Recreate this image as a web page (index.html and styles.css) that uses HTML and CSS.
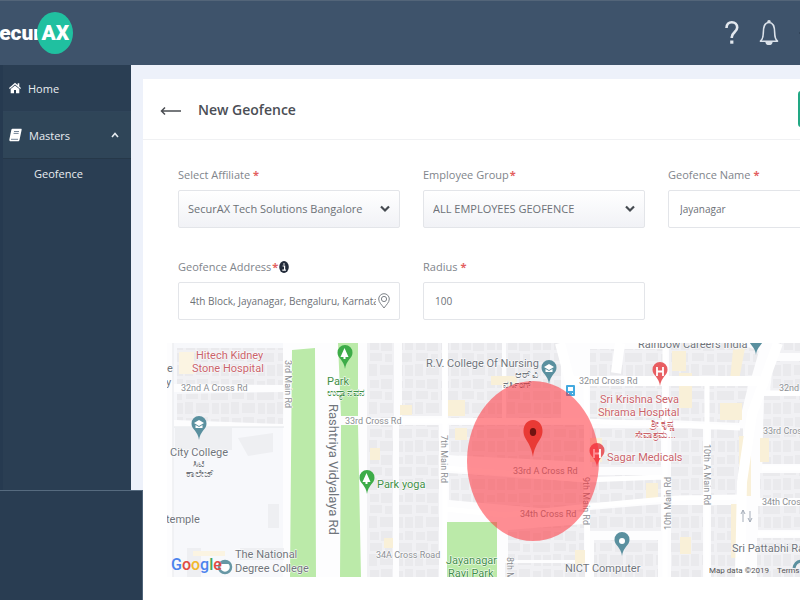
FILE: index.html
```html
<!DOCTYPE html>
<html lang="en">
<head>
<meta charset="utf-8">
<title>New Geofence</title>
<link rel="stylesheet" href="styles.css">
</head>
<body>
<div class="app">
  <header class="topbar">
    <a class="logo" href="#"><span class="logo-lead">Secur</span><span class="logo-mark">AX</span></a>
    <div class="tools">
      <button class="tool" aria-label="Help"><svg width="16" height="28" viewBox="0 0 16 28" fill="none" stroke="#e3e8ee" stroke-width="2.6"><path d="M2.5 9C2.5 5 4.700 3.300 7.800 3.300s5.400 2 5.400 5.200c0 4.500-5.400 5-5.400 9.500v1"/><path d="M7.800 21.500v3.200" stroke-width="3.2"/></svg></button>
      <button class="tool" aria-label="Notifications"><svg width="20" height="28" viewBox="0 0 20 28" fill="none" stroke="#dbe2ea" stroke-width="1.6"><path d="M1.500 22.200h17c-2.500-2.200-2.800-4.200-2.800-8.200 0-5.500-1-10.500-5.700-10.500S4.300 8.500 4.300 14c0 4-.3 6-2.800 8.200z" stroke-linejoin="round"/><path d="M9 3c0-1.500 2-1.500 2 0"/><path d="M7.200 23c.5 3 5.100 3 5.600 0z" fill="#dbe2ea"/></svg></button>
      <button class="tool" aria-label="Account"><svg width="20" height="28" viewBox="0 0 20 28" fill="#26384b"><path d="M1 14l2-2v4z"/></svg></button>
    </div>
  </header>
  <div class="body">
    <nav class="sidebar">
      <a class="item" href="#"><svg width="12" height="12" viewBox="0 0 12 12" fill="#fff"><path d="M6 .7L0 6l.8.900L6 2.500l5.200 4.400.8-.9-1.700-1.500V1.200H8.700v1.900z"/><path d="M6 3.400L1.700 7v4.300H5V8h2v3.300h3.300V7z"/></svg><span>Home</span></a>
      <a class="item item-open" href="#"><svg width="13" height="14" viewBox="0 0 13 14"><path d="M3.500.8h8.300c.8 0 1 .5.800 1.200L10.500 12c-.2.900-.7 1.300-1.500 1.300H1.800c-1.200 0-1.700-.9-1.400-2.100L2.300 2C2.500 1.200 2.900.8 3.500.8z" fill="#fff"/><path d="M5 3.500h5M4.600 5.400h5M2 11.300h7" stroke="#62758a" stroke-width=".9"/></svg><span>Masters</span><svg class="caret" width="8" height="6" viewBox="0 0 8 6" fill="none" stroke="#e6ebf0" stroke-width="1.600"><path d="M1 5l3-3.500L7 5"/></svg></a>
      <a class="subitem" href="#">Geofence</a>
    </nav>
    <main class="main">
      <section class="card">
        <div class="card-head">
          <button class="back" aria-label="Back"><svg width="21" height="10" viewBox="0 0 21 10" fill="none" stroke="#4a4d52" stroke-width="1.500"><path d="M1.500 5H21M5 1.500L1.500 5 5 8.500"/></svg></button>
          <h1>New Geofence</h1>
          <button class="save">Save</button>
        </div>
        <form class="form">
          <div class="field">
            <label for="affiliate">Select Affiliate <b>*</b></label>
            <div class="control"><select id="affiliate"><option>SecurAX Tech Solutions Bangalore</option></select><svg class="chev" width="10" height="8" viewBox="0 0 10 8" fill="none" stroke="#454a50" stroke-width="2.200"><path d="M1 1.500l4 4 4-4"/></svg></div>
          </div>
          <div class="field">
            <label for="group">Employee Group<b>*</b></label>
            <div class="control"><select id="group"><option>ALL EMPLOYEES GEOFENCE</option></select><svg class="chev" width="10" height="8" viewBox="0 0 10 8" fill="none" stroke="#454a50" stroke-width="2.200"><path d="M1 1.500l4 4 4-4"/></svg></div>
          </div>
          <div class="field">
            <label for="name">Geofence Name <b>*</b></label>
            <div class="control"><input id="name" value="Jayanagar"></div>
          </div>
          <div class="field">
            <label for="address">Geofence Address <b>*</b><svg class="info" width="10" height="12" viewBox="0 0 10 12"><ellipse cx="5" cy="6" rx="4.800" ry="6" fill="#222b3a"/><path d="M3.600 5h2v4M3.300 9.200h3.600M5 2.200v1.500" fill="none" stroke="#fff" stroke-width="1.200"/></svg></label>
            <div class="control"><input id="address" class="with-pin" value="4th Block, Jayanagar, Bengaluru, Karnataka"><svg class="locate" width="12" height="16" viewBox="0 0 12 16" fill="none" stroke="#7d8288" stroke-width="1"><path d="M6 15C4 12 .7 9.500.7 6a5.300 5.300 0 0110.600 0C11.300 9.500 8 12 6 15z"/><circle cx="6" cy="6" r="2.600"/></svg></div>
          </div>
          <div class="field">
            <label for="radius">Radius <b>*</b></label>
            <div class="control"><input id="radius" value="100"></div>
          </div>
        </form>
        <svg class="map" viewBox="167 345 734 234" preserveAspectRatio="xMinYMin slice" role="img" aria-label="Map">
          <defs>
            <pattern id="lots" width="46" height="38" patternUnits="userSpaceOnUse">
              <rect width="46" height="38" fill="#f1f1f4"/>
              <path d="M2 2h9v8H2zM13 1h11v10H13zM27 3h8v7h-8zM37 1h8v9h-8zM2 13h12v8H2zM17 14h7v8h-7zM27 13h17v9H27zM1 24h8v12H1zM12 25h13v10H12zM28 25h7v11h-7zM37 25h8v11h-8z" fill="#eaeaed"/>
            </pattern>
            <symbol id="pin" viewBox="0 0 16 24" overflow="visible"><path d="M8 0a7.500 7.500 0 00-7.500 7.800C.5 13.500 7 15 8 24c1-9 7.500-10.500 7.500-16.200A7.500 7.500 0 008 0z"/></symbol>
          </defs>
          <rect x="167" y="345" width="734" height="234" fill="#fdfdfe"/>
          <path d="M174 345h109v42l-109-1zM174 394h110l-1 32-109-4zM174 429h109v150H174z" fill="#f7f8fb"/>
          <path d="M177 350h106v37l-106-1zM177 396l106-2v32l-106-4z" fill="url(#lots)"/>
          <path d="M173 345v234M174 429h110" stroke="#e4e6ea" fill="none"/>
          <path d="M175 430h57v22h-57zM238 440l35-5v19l-25 4zM268 506h11v24h-11zM187 550h14v29h-14zM240 550h44v12h-44z" fill="#eeeff2"/>
          <path d="M179 354h15v22h-15zM193 553h32v5h-32z" fill="#fbf4e2"/>
          <path d="M292 352l23-2 1 229h-26zM338 345h20v73h-17zM341 427h17l3 152h-21z" fill="#bbeaa9"/>
          <path d="M367 345h27v75h-27zM402 345h40v73h-40zM448 345h54v75h-54zM506 345h55v75h-55zM367 427h26v152h-26zM399 427h40v152h-40zM449 427h135v37l-135-7zM449 475l135 9v30l-135-12zM508 532l76-6v36h-76zM505 565h80v14h-80zM590 351h74v28h-74zM669 345h68l22 8-8 28-82-3zM590 388h72v34h-72zM669 388h79l-9 37-70-3zM775 345h126v10H775zM773 363h128v27h-24l-107 5zM764 398h137v68H762zM760 475h141v25H760zM758 508h143v24H758zM757 540h144v39H757zM592 430h69v39h-69zM671 430h32v70h-32zM711 430h32v69h-32zM590 477h71v23l-71 6zM590 512l71-6v27h-71zM671 507h32v72h-32zM711 507h34v72h-34zM594 542h64v37h-64z" fill="url(#lots)"/>
          <g fill="#f9f0d8">
            <path d="M400 407h12v10h-12zM448 402h17v16h-17zM455 430h12v12h-12zM370 450h10v12h-10zM384 540h9v10h-9zM491 378h26v9h-26zM733 352l12-2-6 32h-9zM739 438h12v60h-12zM731 506h14v54h-14zM760 440h9v24h-9zM720 405h22v17h-22zM679 375h13v35h-13zM672 353h14v20h-14zM590 440h12v24h-12zM646 485h12v18h-12zM680 539h11v17h-11zM575 552h10v16h-10zM600 410h10v9h-10z"/>
          </g>
          <path d="M560 345l10 38h190M740 579l2-95 10-68 26-71M620 345l-4 30" fill="none" stroke="#fff" stroke-width="10"/>
          <path d="M345 423h240l155 7M445 345v234M586 385l2 194M665 345v234M707 385v194M445 470l140 12 78-3M445 511l60 6 85-9 85-8 67-1M762 395h139M762 470h139M758 536h143" fill="none" stroke="#fff" stroke-width="5"/>
          <path d="M447 524h50v55h-50z" fill="#bbeaa9"/>
          <g class="lbl">
            <text x="167" y="374">e</text><text x="166" y="388">y</text>
            <g class="road">
              <text x="181" y="393">32nd A Cross Rd</text><text x="345" y="426">33rd Cross Rd</text><text x="376" y="560">34A Cross Road</text>
              <text x="579" y="386">32nd Cross Rd</text><text x="779" y="393">32nd Cross Rd</text><text x="763" y="436">33rd Cross Rd</text><text x="762" y="507">34th Cross Rd</text>
              <text x="513" y="476">33rd A Cross Rd</text><text x="520" y="519">34th Cross Rd</text>
              <text transform="translate(285 362) rotate(90)">3rd Main Rd</text>
              <text transform="translate(441 437) rotate(90)">7th Main Rd</text>
              <text transform="translate(583 479) rotate(90)">9th Main Rd</text>
              <text transform="translate(507 559) rotate(90)">8th Main</text>
              <text transform="translate(671 532) rotate(-90)">10th Main Rd</text>
              <text transform="translate(704 446) rotate(90)">10th A Main Rd</text>
            </g>
            <text class="wide-road" transform="translate(329 406) rotate(90)">Rashtriya Vidyalaya Rd</text>
            <text x="170" y="458">City College</text><text x="193" y="469" class="kn">ಸಿಟಿ</text><text x="186" y="479" class="kn">ಕಾಲೇಜ್</text>
            <text x="166" y="525">temple</text>
            <text x="235" y="560">The National</text><text x="235" y="574">Degree College</text>
            <text x="426" y="369">R.V. College Of Nursing</text><text x="515" y="380" class="kn">ಆರ್ ವಿ</text><text x="503" y="390" class="kn">ನರ್ಸಿಂಗ್</text>
            <text x="638" y="350">Rainbow Careers India</text>
            <text x="565" y="574">NICT Computer</text>
            <text x="732" y="554">Sri Pattabhi Rama</text>
            <g fill="#3f8f47"><text x="327" y="387">Park</text><text x="327" y="398" class="kn">ಉದ್ಯಾನವನ</text><text x="377" y="490">Park yoga</text><text x="446" y="566">Jayanagar</text><text x="448" y="579">Ravi Park</text></g>
            <g fill="#c9626a"><text x="196" y="361">Hitech Kidney</text><text x="192" y="374">Stone Hospital</text><text x="600" y="405">Sri Krishna Seva</text><text x="598" y="418">Shrama Hospital</text><text x="651" y="429" class="kn">ಶ್ರೀ ಕೃಷ್ಣ</text><text x="635" y="440" class="kn">ಸೇವಾಶ್ರಮ...</text><text x="607" y="463">Sagar Medicals</text></g>
          </g>
          <g fill="#fff">
            <use href="#pin" x="191" y="418" width="16" height="24" fill="#5a909f"/><path d="M194 425l5-3 5 3-5 3zM195.500 427v3h7v-3l-3.500 2z"/>
            <use href="#pin" x="541" y="362" width="16" height="24" fill="#5a909f"/><path d="M544 369l5-3 5 3-5 3zM545.500 371v3h7v-3l-3.500 2z"/>
            <use href="#pin" x="748" y="333" width="16" height="24" fill="#5a909f"/>
            <use href="#pin" x="614" y="534" width="16" height="24" fill="#5a909f"/><circle cx="622" cy="543" r="3"/>
            <use href="#pin" x="337" y="347" width="16" height="24" fill="#3dac48"/><path d="M344.500 350l4 9h-3v2h-2v-2h-3z"/>
            <use href="#pin" x="359" y="472" width="16" height="24" fill="#3dac48"/><path d="M366.500 475l4 9h-3v2h-2v-2h-3z"/>
            <use href="#pin" x="652" y="364" width="16" height="24" fill="#e85e62"/><path d="M657 369v9M663 369v9M657 373.500h6" stroke="#fff" stroke-width="1.800"/>
            <use href="#pin" x="589" y="445" width="16" height="24" fill="#e85e62"/><path d="M594 451v9M600 451v9M594 455.500h6" stroke="#fff" stroke-width="1.800"/>
            <rect x="566" y="387" width="9" height="11" rx="1" fill="#43a9df"/><path d="M568 389h5v4h-5zM568 395h1v1h-1zM572 395h1v1h-1z"/>
            <circle cx="225" cy="569" r="6" fill="#fff" stroke="#6797a5" stroke-width="2.500"/><path d="M219 566l6-4 6 4z" fill="#6797a5"/>
            <path d="M794 570c1-5 4-7 8-7" fill="none" stroke="#5a909f" stroke-width="3"/>
          </g>
          <path d="M743 524v-12m-2 4l2-4 2 4M750 513v11m-2-4l2 4 2-4" fill="none" stroke="#a5adb9"/>
          <ellipse cx="533" cy="463" rx="66" ry="80" fill="#ff2630" fill-opacity=".52"/>
          <path d="M533 422c-6 0-9.500 5-9.500 11 0 9 7.500 11 9.500 26 2-15 9.500-17 9.500-26 0-6-3.500-11-9.500-11z" fill="#e93a35"/><ellipse cx="533" cy="434" rx="3.200" ry="4" fill="#701411"/>
          <text x="171" y="572" class="google"><tspan fill="#4c84ed">G</tspan><tspan fill="#e14b43">o</tspan><tspan fill="#f2b72c">o</tspan><tspan fill="#4c84ed">g</tspan><tspan fill="#45a65a">l</tspan><tspan fill="#e14b43">e</tspan></text>
          <text x="709" y="575" class="credit">Map data ©2019</text><text x="777" y="575" class="credit">Terms of Use</text>
        </svg>
      </section>
    </main>
  </div>
</div>
<aside class="dock"></aside>
</body>
</html>
```
FILE: styles.css
```css
* { box-sizing: border-box; }
body { margin: 0; overflow: hidden; font-family: "Open Sans", "Noto Sans", sans-serif; font-size: 11px; color: #666b72; background: #fff; }
button { border: 0; background: none; padding: 0; font: inherit; }
a { color: inherit; text-decoration: none; }
svg { display: block; flex: none; }
/* The workspace is wider than the window and runs off its right edge. */
.app { width: 117.5vw; min-height: 100vh; display: flex; flex-direction: column; }
.topbar { height: 65px; background: #3e536b; display: flex; align-items: center; justify-content: space-between; padding-right: 122px; border-top: 1px solid #536579; }
.logo { display: flex; align-items: center; margin-left: -14px; color: #fff; font: 900 21px Roboto, sans-serif; }
.logo-mark { width: 36px; height: 42px; margin-left: -4px; border-radius: 50%; background: #20c0a0; display: flex; align-items: center; justify-content: center; }
.tools { display: flex; gap: 19px; }
.tool { display: flex; }
.body { flex: 1; display: flex; background: #edf1fa; }
.sidebar { width: 131px; background: #2a3e53; border-left: 3px solid #263a50; color: #e9edf1; font-size: 11px; }
.item { height: 47px; display: flex; align-items: center; gap: 7px; padding: 0 12px 0 6px; border-bottom: 1px solid #30455a; }
.item-open { background: #2f4558; border-color: #263849; }
.caret { margin-left: auto; }
.subitem { display: block; padding: 6px 0 6px 31px; line-height: 18px; }
.main { flex: 1; padding: 14px 15px 0 12px; }
.card { height: 100%; background: #fff; }
.card-head { height: 61px; display: flex; align-items: center; gap: 17px; padding: 0 17px; border-bottom: 1px solid #f0f1f3; }
.back { display: flex; margin-top: 4px; }
h1 { margin: 0; font-size: 14px; font-weight: 600; color: #4b4e55; }
.save { margin-left: auto; width: 110px; height: 36px; border-radius: 3px; background: #22a884; color: #fff; }
.form { display: grid; grid-template-columns: repeat(3, 1fr); gap: 29px 23px; padding: 25px 35px 23px; }
.field { display: flex; flex-direction: column; gap: 5px; min-width: 0; }
label { display: flex; align-items: center; gap: 3px; height: 20px; line-height: 20px; font-size: 11px; color: #7f858c; }
label b { color: #e35f5f; }
label[for="group"], label[for="address"] { gap: 1px; }
.control { display: grid; align-items: center; }
.control > * { grid-area: 1 / 1; }
input, select { width: 100%; height: 38px; border: 1px solid #e3e5e9; border-radius: 2px; padding: 0 11px; background: #fff; font: 10px "Open Sans", "Noto Sans", sans-serif; color: #6d7177; }
select { appearance: none; padding: 0 9px 2px; font-size: 11px; background: linear-gradient(#fff, #f1f2f6); }
.with-pin { padding-right: 23px; }
.chev { justify-self: end; margin-right: 10px; pointer-events: none; }
.locate { justify-self: end; margin-right: 10px; }
.map { width: auto; height: auto; margin: 0 24px; }
.lbl { font: 11px Roboto, sans-serif; fill: #70757c; paint-order: stroke; stroke: #fff; stroke-width: 1px; }
.road { font-size: 9px; fill: #8b8e93; }
.wide-road { font-size: 13px; }
.kn { font-size: 10px; }
.google { font: 500 16px Roboto, sans-serif; }
.credit { font: 8px Roboto, sans-serif; fill: #555; }
/* Solid panel covering the lower end of the sidebar. */
.dock { position: absolute; left: 0; bottom: 0; width: 143px; height: 110px; background: #293d52; border-top: 1px solid #566b7f; border-right: 1px solid #50657a; }
```
